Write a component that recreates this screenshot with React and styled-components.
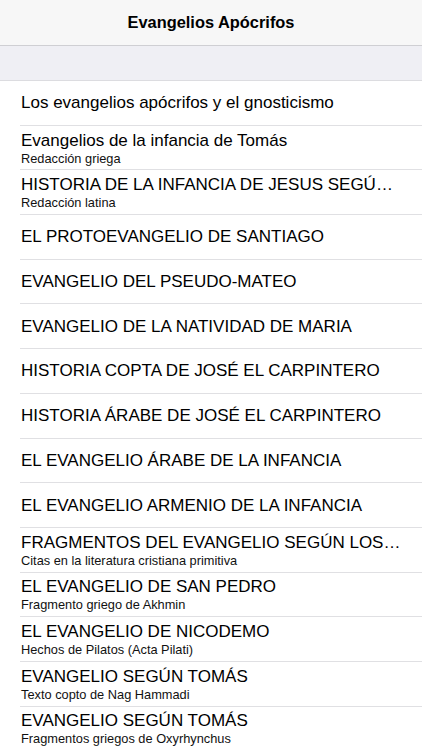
import styled, { createGlobalStyle } from 'styled-components'

const GlobalStyle = createGlobalStyle`
  html, body {
    margin: 0;
    padding: 0;
    background: #ffffff;
  }
  body {
    font-family: "Liberation Sans", Arial, sans-serif;
    color: #000;
  }
`

const Screen = styled.div`
  width: 422px;
  height: 750px;
  overflow: hidden;
  display: flex;
  flex-direction: column;
  background: #fff;
`

const NavBar = styled.header`
  height: 45px;
  flex-shrink: 0;
  display: flex;
  align-items: center;
  justify-content: center;
  background: #f7f7f7;
  border-bottom: 1px solid #cfcfd3;
`

const Title = styled.h1`
  margin: 0 0 1px 0;
  font-size: 16.4px;
  font-weight: 700;
`

const SectionHeader = styled.div`
  height: 34px;
  flex-shrink: 0;
  background: #efeff4;
  border-bottom: 1px solid #dcdce0;
`

const List = styled.ul`
  list-style: none;
  margin: 0;
  padding: 0 0 0 20px;
`

const Row = styled.li`
  height: 44.7px;
  box-sizing: border-box;
  display: flex;
  flex-direction: column;
  justify-content: center;
  padding: 1px 20px 0 1px;
  border-bottom: 1px solid #e0e0e3;
`

const RowTitle = styled.span`
  font-size: 17px;
  line-height: 20px;
  white-space: nowrap;
`

const RowSubtitle = styled.span`
  font-size: 12.8px;
  line-height: 15px;
  color: #111;
  white-space: nowrap;
`

const items = [
  { title: 'Los evangelios apócrifos y el gnosticismo' },
  { title: 'Evangelios de la infancia de Tomás', sub: 'Redacción griega' },
  { title: 'HISTORIA DE LA INFANCIA DE JESUS SEGÚ…', sub: 'Redacción latina' },
  { title: 'EL PROTOEVANGELIO DE SANTIAGO' },
  { title: 'EVANGELIO DEL PSEUDO-MATEO' },
  { title: 'EVANGELIO DE LA NATIVIDAD DE MARIA' },
  { title: 'HISTORIA COPTA DE JOSÉ EL CARPINTERO' },
  { title: 'HISTORIA ÁRABE DE JOSÉ EL CARPINTERO' },
  { title: 'EL EVANGELIO ÁRABE DE LA INFANCIA' },
  { title: 'EL EVANGELIO ARMENIO DE LA INFANCIA' },
  { title: 'FRAGMENTOS DEL EVANGELIO SEGÚN LOS…', sub: 'Citas en la literatura cristiana primitiva' },
  { title: 'EL EVANGELIO DE SAN PEDRO', sub: 'Fragmento griego de Akhmin' },
  { title: 'EL EVANGELIO DE NICODEMO', sub: 'Hechos de Pilatos (Acta Pilati)' },
  { title: 'EVANGELIO SEGÚN TOMÁS', sub: 'Texto copto de Nag Hammadi' },
  { title: 'EVANGELIO SEGÚN TOMÁS', sub: 'Fragmentos griegos de Oxyrhynchus' },
]

const App = () => (
  <>
    <GlobalStyle />
    <Screen>
      <NavBar>
        <Title>Evangelios Apócrifos</Title>
      </NavBar>
      <SectionHeader />
      <List>
        {items.map((item, i) => (
          <Row key={i}>
            <RowTitle>{item.title}</RowTitle>
            {item.sub && <RowSubtitle>{item.sub}</RowSubtitle>}
          </Row>
        ))}
      </List>
    </Screen>
  </>
)

export default App
